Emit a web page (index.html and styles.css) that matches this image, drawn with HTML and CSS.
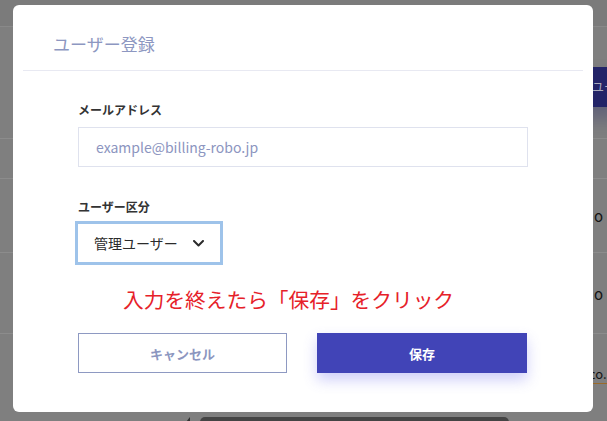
FILE: index.html
```html
<!DOCTYPE html>
<html lang="ja">
<head>
<meta charset="utf-8">
<title>ユーザー登録</title>
<link rel="stylesheet" href="styles.css">
</head>
<body>
<div class="page">
  <div class="topbar"></div>
  <div class="actions">
    <div class="bg-button">ユー</div>
  </div>
  <div class="bg-table">
    <div class="bg-row bg-row-head"></div>
    <div class="bg-row bg-row-1"><span class="bg-cell">o</span></div>
    <div class="bg-row bg-row-2"><span class="bg-cell">o</span></div>
    <div class="bg-row bg-row-3"><span class="bg-cell bg-link">co.</span></div>
  </div>
  <div class="bg-footer">
    <span class="bg-tri"></span>
    <span class="bg-scroll"></span>
  </div>
</div>

<div class="modal">
  <div class="modal-header">
    <h1 class="modal-title">ユーザー登録</h1>
  </div>
  <div class="modal-divider"></div>
  <div class="modal-body">
    <label class="field-label label-email">メールアドレス</label>
    <input class="text-input" type="text" placeholder="example@billing-robo.jp">
    <label class="field-label label-type">ユーザー区分</label>
    <div class="select-box">
      <span class="select-value">管理ユーザー</span>
      <svg class="chevron" width="11" height="7" viewBox="0 0 11 7"><polyline points="1,1 5.5,5.5 10,1" fill="none" stroke="#2b2b2b" stroke-width="2" stroke-linecap="round" stroke-linejoin="round"/></svg>
    </div>
    <p class="note">入力を終えたら「保存」をクリック</p>
    <div class="button-row">
      <button class="btn btn-cancel">キャンセル</button>
      <button class="btn btn-save">保存</button>
    </div>
  </div>
</div>
</body>
</html>
```

FILE: styles.css
```css
html, body {
  margin: 0;
  padding: 0;
}
body {
  width: 607px;
  height: 421px;
  overflow: hidden;
  background: #7f7f7f;
  font-family: "Noto Sans CJK JP", "Noto Sans", sans-serif;
  position: relative;
}

/* background page (dimmed) */
.page {
  width: 607px;
  height: 421px;
  overflow: hidden;
}
.topbar {
  height: 26px;
  background: #7b7b7b;
  border-bottom: 1px solid #898989;
}
.actions {
  display: flex;
  padding-top: 40px;
  padding-left: 578px;
  height: 71px;
}
.bg-button {
  flex: none;
  width: 29px;
  height: 40px;
  background: #232468;
  color: #a9aabc;
  font-size: 12px;
  line-height: 40px;
  padding-left: 14px;
  white-space: nowrap;
  overflow: hidden;
  box-shadow: 0 12px 18px rgba(40, 42, 110, 0.35);
}
.bg-row {
  border-top: 1px solid #8c8c8c;
  display: flex;
  align-items: center;
  padding-left: 594px;
  font-size: 15px;
  color: #141414;
  white-space: nowrap;
}
.bg-row-head { height: 39px; }
.bg-row-1 { height: 73px; }
.bg-row-2 { height: 80px; }
.bg-row-3 { height: 79px; padding-left: 589px; font-size: 13px; }
.bg-link {
  border-bottom: 1px solid #9a6a2a;
}
.bg-footer {
  display: flex;
  align-items: flex-end;
  height: 9px;
  padding-left: 186px;
  gap: 10px;
}
.bg-tri {
  width: 0;
  height: 0;
  border-left: 4px solid transparent;
  border-bottom: 5px solid #333;
}
.bg-scroll {
  width: 309px;
  height: 5px;
  background: #444;
  border-radius: 5px 5px 0 0;
}

/* modal */
.modal {
  position: absolute;
  left: 13px;
  top: 5px;
  width: 580px;
  height: 407px;
  background: #fff;
  border-radius: 6px;
  display: flex;
  flex-direction: column;
}
.modal-header {
  height: 53px;
  padding-top: 12px;
  padding-left: 40px;
  display: flex;
  align-items: center;
}
.modal-title {
  margin: 0;
  font-size: 17px;
  font-weight: 400;
  color: #8d97c1;
  line-height: 20px;
}
.modal-divider {
  height: 1px;
  margin: 0 10px;
  background: #e8e9f2;
}
.modal-body {
  padding: 0 65px;
  display: flex;
  flex-direction: column;
  align-items: flex-start;
}
.field-label {
  display: block;
  font-size: 12px;
  font-weight: 700;
  color: #333;
  line-height: 16px;
  height: 16px;
}
.label-email { margin-top: 31px; }
.label-type { margin-top: 32px; }
.text-input {
  margin-top: 9px;
  width: 450px;
  height: 40px;
  box-sizing: border-box;
  border: 1px solid #dfe2ee;
  border-radius: 0;
  padding: 0 17px;
  font-family: "Noto Sans CJK JP", "Noto Sans", sans-serif;
  font-size: 14px;
  color: #333;
  outline: none;
}
.text-input::placeholder {
  color: #8c95c0;
  opacity: 1;
}
.select-box {
  margin-top: 6px;
  margin-left: -3px;
  width: 148px;
  height: 44px;
  box-sizing: border-box;
  border: 3px solid #9ec3ea;
  display: flex;
  align-items: center;
  padding-left: 16px;
  gap: 15px;
}
.select-value {
  font-size: 14px;
  color: #2b2b2b;
  line-height: 20px;
  white-space: nowrap;
}
.chevron {
  flex: none;
  display: block;
}
.note {
  margin: 19px 0 0 45px;
  font-size: 20.7px;
  line-height: 30px;
  color: #e62129;
  white-space: nowrap;
}
.button-row {
  margin-top: 19px;
  display: flex;
  gap: 30px;
}
.btn {
  flex: none;
  height: 40px;
  box-sizing: border-box;
  font-family: "Noto Sans CJK JP", "Noto Sans", sans-serif;
  font-size: 13px;
  font-weight: 700;
  border-radius: 0;
  padding: 0;
  cursor: pointer;
}
.btn-cancel {
  width: 209px;
  background: #fff;
  border: 1px solid #8e99c2;
  color: #8c96bf;
}
.btn-save {
  width: 210px;
  background: #4144b7;
  border: none;
  color: #fff;
  box-shadow: 0 7px 14px rgba(95, 95, 235, 0.3);
}
```
